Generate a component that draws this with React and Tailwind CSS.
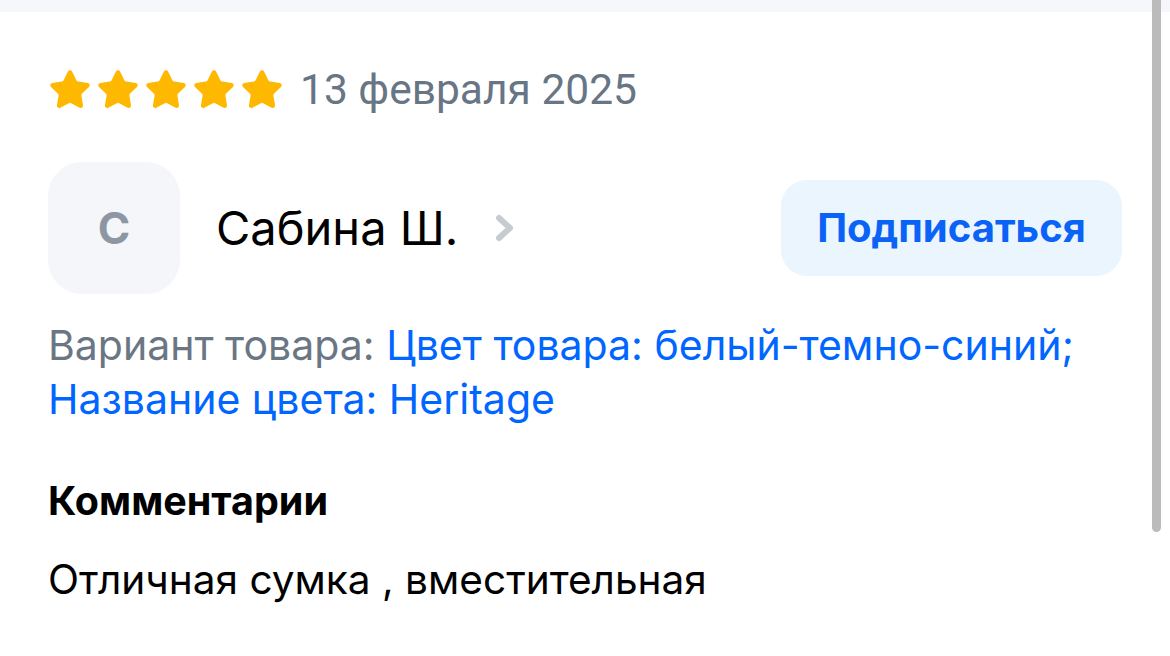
import { Star } from 'lucide-react';

const STARS = [1, 2, 3, 4, 5];

export default function App() {
  return (
    <div className="relative w-[1170px] h-[656px] bg-white overflow-hidden font-['Inter','Noto_Sans',sans-serif]">
      {/* top strip of the previous block */}
      <div className="h-[12px] bg-[#f6f7fa]" />

      <div className="px-[48px] pt-[58px]">
        {/* rating + date */}
        <div className="flex items-center h-[40px]">
          <div className="flex items-center gap-[4px]">
            {STARS.map(s => (
              <Star key={s} className="w-[44px] h-[44px]" fill="#FFB800" stroke="#FFB800" strokeWidth={1.5} />
            ))}
          </div>
          <span className="ml-[16px] text-[42.5px] leading-[40px] text-[#687585] font-['Roboto',sans-serif]">13 февраля 2025</span>
        </div>

        {/* author */}
        <div className="mt-[52px] flex items-center justify-between">
          <div className="flex items-center">
            <div className="w-[132px] h-[132px] rounded-[34px] bg-[#f5f6fa] flex items-center justify-center">
              <span className="text-[44px] font-bold text-[#8d97a4]">С</span>
            </div>
            <span className="ml-[36px] text-[47px] text-black">Сабина Ш.</span>
            <svg className="ml-[36px] w-[22px] h-[32px]" viewBox="0 0 22 32" fill="none" stroke="#c6cbd2" strokeWidth={6} strokeLinecap="round" strokeLinejoin="round">
              <path d="M5 6l11 10-11 10" />
            </svg>
          </div>
          <button className="w-[341px] h-[96px] rounded-[26px] bg-[#eaf5fe] text-[40px] font-bold text-[#0a63f6]">
            Подписаться
          </button>
        </div>

        {/* variant */}
        <p className="mt-[24px] text-[41px] leading-[54px] text-[#6b7685]">
          Вариант товара: <span className="text-[#0066ff]">Цвет товара: белый-темно-синий; Название цвета: Heritage</span>
        </p>

        {/* comments */}
        <h3 className="mt-[53px] text-[39.5px] leading-[44px] font-bold text-black">Комментарии</h3>
        <p className="mt-[33px] text-[40.6px] leading-[48px] text-black">Отличная сумка , вместительная</p>
      </div>

      {/* overlay scrollbar */}
      <div className="absolute top-0 left-[1152px] w-[9px] h-[532px] rounded-b-full bg-[#bbbbbb]" />
    </div>
  );
}
